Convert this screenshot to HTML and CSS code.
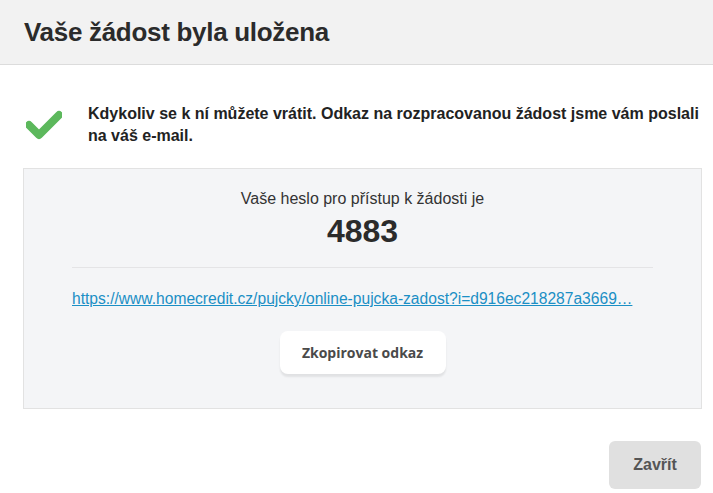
FILE: index.html
```html
<!DOCTYPE html>
<html lang="cs">
<head>
<meta charset="utf-8">
<link rel="stylesheet" href="styles.css">
</head>
<body>
<div class="modal">
  <header class="head">
    <h1 class="title">Vaše žádost byla uložena</h1>
  </header>
  <main class="content">
    <div class="notice">
      <svg class="check" width="36" height="30" viewBox="0 0 36 30"><path d="M3 15 L13 25 L33 5" fill="none" stroke="#5cb85c" stroke-width="8" stroke-linecap="round" stroke-linejoin="round"/></svg>
      <p class="notice-text">Kdykoliv se k ní můžete vrátit. Odkaz na rozpracovanou žádost jsme vám poslali na váš e-mail.</p>
    </div>
    <section class="box">
      <p class="label">Vaše heslo pro přístup k žádosti je</p>
      <p class="code">4883</p>
      <hr class="sep">
      <a class="link" href="#">https://www.homecredit.cz/pujcky/online-pujcka-zadost?i=d916ec218287a3669…</a>
      <button class="copy">Zkopirovat odkaz</button>
    </section>
  </main>
  <footer class="foot">
    <button class="close">Zavřít</button>
  </footer>
</div>
</body>
</html>
```

FILE: styles.css
```css
* { box-sizing: border-box; }
html, body { margin: 0; padding: 0; background: #fff; }
body { font-family: "Liberation Sans", Arial, sans-serif; color: #222; width: 713px; height: 493px; overflow: hidden; }
.modal { display: flex; flex-direction: column; }
.head { background: #f2f2f2; border-bottom: 1px solid #dcdcdc; height: 65px; display: flex; align-items: center; padding: 0 24px; }
.title { margin: 0; font-size: 26px; font-weight: bold; color: #2b2b2b; letter-spacing: -0.3px; }
.content { padding: 38px 11px 0 23px; }
.notice { display: flex; align-items: center; gap: 26px; padding-left: 3px; }
.check { flex: none; }
.notice-text { margin: 0; font-size: 16px; font-weight: bold; line-height: 22px; color: #222; }
.box { margin-top: 21px; background: #f4f5f7; border: 1px solid #e2e2e2; height: 241px; display: flex; flex-direction: column; align-items: center; padding: 20px 48px 0; }
.label { margin: 0; font-size: 16px; line-height: 20px; color: #333; }
.code { margin: 4px 0 0; font-size: 32px; font-weight: bold; line-height: 36px; color: #2b2b2b; }
.sep { width: 100%; border: 0; border-top: 1px solid #e4e4e6; margin: 18px 0 0; }
.link { margin-top: 22px; align-self: flex-start; font-size: 15.6px; line-height: 18px; color: #1b8fc5; text-decoration: underline; white-space: nowrap; }
.copy { margin-top: 23px; width: 166px; height: 43px; border: 0; border-radius: 8px; background: #fff; box-shadow: 0 3px 2px rgba(0,0,0,0.08); font-family: "Open Sans", sans-serif; font-weight: bold; font-size: 14px; color: #4a4a4a; }
.foot { display: flex; justify-content: flex-end; padding: 32px 12px 0; }
.close { width: 92px; height: 48px; border: 0; border-radius: 6px; background: #e0e0e0; font-family: "Liberation Sans", Arial, sans-serif; font-weight: bold; font-size: 16px; color: #555; }
```
